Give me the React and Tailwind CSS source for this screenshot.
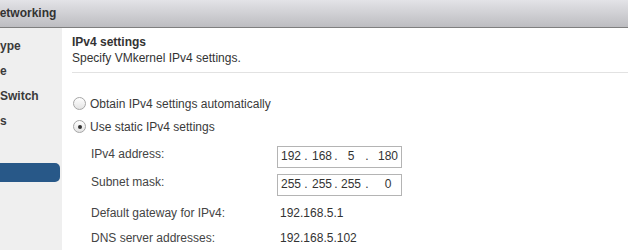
import React from "react";

function Radio({ checked }) {
  return (
    <span className="relative flex h-[13px] w-[13px] shrink-0 items-center justify-center rounded-full border border-[#a6a6a6] bg-gradient-to-b from-[#ffffff] to-[#e4e4e4]">
      {checked && <span className="h-[4px] w-[4px] rounded-full bg-[#333333]" />}
    </span>
  );
}

function IpBox({ parts }) {
  return (
    <div className="flex h-[22px] w-[125px] border border-[#b4b4b4] bg-white pl-[3px] pt-[2px] leading-[14px] text-[#333333]">
      <span className="w-[20px] text-center">{parts[0]}</span>
      <span className="w-[10px] text-center">.</span>
      <span className="w-[22px] text-center">{parts[1]}</span>
      <span className="w-[6px] text-center">.</span>
      <span className="w-[24px] text-center">{parts[2]}</span>
      <span className="w-[8px] text-center">.</span>
      <span className="w-[30px] pl-[4px] text-center">{parts[3]}</span>
    </div>
  );
}

export default function App() {
  return (
    <div className="h-[250px] w-[628px] overflow-hidden bg-white font-['Liberation_Sans',Arial,sans-serif] text-[12px] text-[#333333]">
      <div className="flex h-[28px] items-center overflow-hidden border-b border-[#7f7f7f] bg-gradient-to-b from-[#e3e3e7] to-[#bdbdc1] pb-[1px]">
        <span className="ml-[-9px] whitespace-nowrap text-[12px] font-bold leading-[14px] text-[#333333]">
          Networking
        </span>
      </div>
      <div className="flex h-[222px]">
        <div className="w-[62px] shrink-0 overflow-hidden bg-[#efefef] pt-[6px]">
          <div className="h-[25px] whitespace-nowrap font-bold leading-[25px] text-[#3a3a3a]">ype</div>
          <div className="h-[25px] whitespace-nowrap font-bold leading-[25px] text-[#3a3a3a]">e</div>
          <div className="h-[25px] whitespace-nowrap font-bold leading-[25px] text-[#3a3a3a]">Switch</div>
          <div className="h-[25px] whitespace-nowrap font-bold leading-[25px] text-[#3a3a3a]">s</div>
          <div className="mt-[29px] h-[19px] w-[60px] rounded-r-[5px] bg-[#285888]" />
        </div>
        <div className="flex-1 pl-[10px] pt-[6px]">
          <div className="font-bold leading-[16px] text-[#333333]">IPv4 settings</div>
          <div className="leading-[16px] text-[#333333]">Specify VMkernel IPv4 settings.</div>
          <div className="mt-[6px] border-t border-[#e2e2e2]" />
          <div className="mt-[19px] flex h-[23px] items-center gap-[4px] pl-[1px]">
            <Radio />
            <span className="leading-[14px] text-[#3a3a3a]">Obtain IPv4 settings automatically</span>
          </div>
          <div className="flex h-[23px] items-center gap-[4px] pl-[1px]">
            <Radio checked />
            <span className="leading-[14px] text-[#3a3a3a]">Use static IPv4 settings</span>
          </div>
          <div className="mt-[8px] flex items-start pl-[19px]">
            <span className="w-[186px] pt-[1px] leading-[14px] text-[#444444]">IPv4 address:</span>
            <IpBox parts={["192", "168", "5", "180"]} />
          </div>
          <div className="mt-[6px] flex items-start pl-[19px]">
            <span className="w-[186px] pt-[1px] leading-[14px] text-[#444444]">Subnet mask:</span>
            <IpBox parts={["255", "255", "255", "0"]} />
          </div>
          <div className="mt-[5px] flex h-[25px] pl-[19px] leading-[25px]">
            <span className="w-[186px] text-[#444444]">Default gateway for IPv4:</span>
            <span className="pl-[3px] text-[#333333]">192.168.5.1</span>
          </div>
          <div className="flex h-[25px] pl-[19px] leading-[25px]">
            <span className="w-[186px] text-[#444444]">DNS server addresses:</span>
            <span className="pl-[3px] text-[#333333]">192.168.5.102</span>
          </div>
        </div>
      </div>
    </div>
  );
}
